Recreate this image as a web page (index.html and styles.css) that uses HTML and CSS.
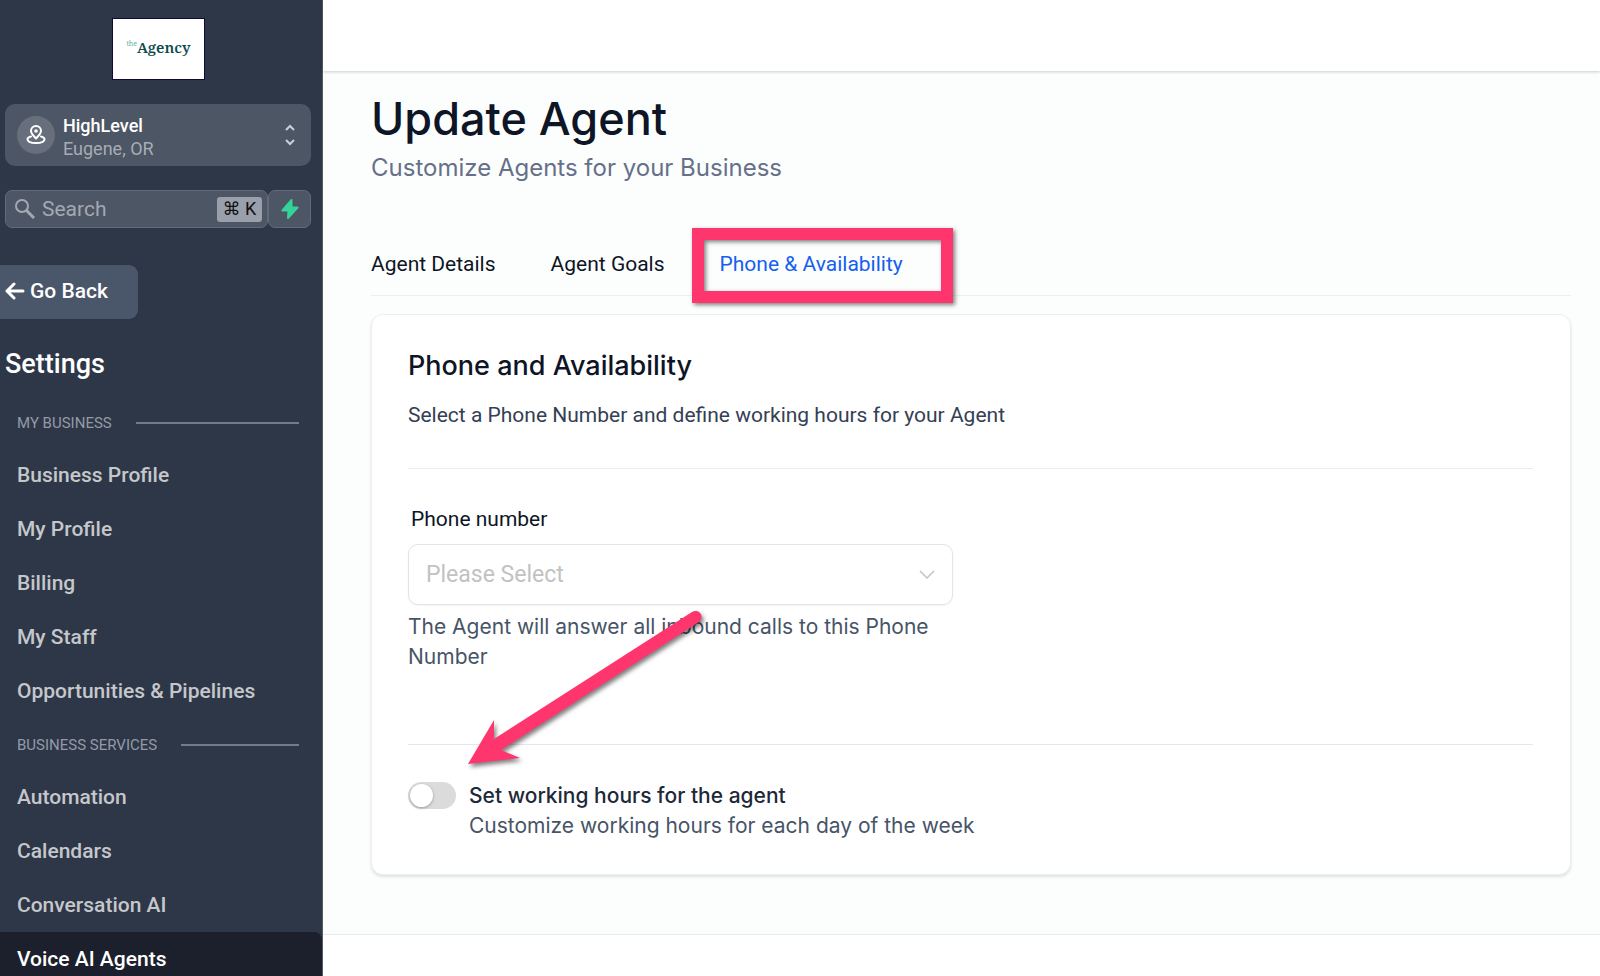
FILE: index.html
```html
<!DOCTYPE html>
<html lang="en">
  <head>
    <meta charset="UTF-8" />
    <meta name="viewport" content="width=device-width, initial-scale=1.0" />
    <title>Update Agent</title>
    <link rel="stylesheet" href="styles.css">
  </head>
  <body>
    <aside class="sidebar">
      <div class="logo"><small>the</small><b>Agency</b></div>

      <button class="account">
        <span class="avatar">
          <svg width="20" height="20" viewBox="0 0 20 20" fill="none" stroke="#fff" stroke-width="2" stroke-linecap="round" stroke-linejoin="round">
            <path d="M10 13.500C7 10.500 5 8.500 5 6a5 5 0 0 1 10 0c0 2.500-2 4.500-5 7.500z" />
            <circle cx="10" cy="6" r="0.800" fill="#fff" />
            <path d="M5 11.500c-2.200.6-3.500 1.500-3.500 2.700C1.500 16.500 5.300 18 10 18s8.500-1.500 8.500-3.800c0-1.200-1.300-2.100-3.500-2.700" />
          </svg>
        </span>
        <span class="account-text">
          <strong>HighLevel</strong>
          <span>Eugene, OR</span>
        </span>
        <svg width="12" height="24" viewBox="0 0 12 24" fill="none" stroke="#cbd0d8" stroke-width="2">
          <path d="M2 7l4-4 4 4M2 17l4 4 4-4" />
        </svg>
      </button>

      <div class="search-row">
        <div class="search">
          <svg width="20" height="20" viewBox="0 0 20 20" fill="none" stroke="#a3a9b3" stroke-width="2">
            <circle cx="7" cy="7" r="6" />
            <path d="M11.500 11.500L19 19" stroke-width="3" />
          </svg>
          <input type="text" placeholder="Search" aria-label="Search" />
          <kbd>⌘ K</kbd>
        </div>
        <button class="bolt" aria-label="Quick actions">
          <svg width="18" height="20" viewBox="0 0 18 20">
            <path d="M10.500 1L1.500 11.500H7.500L7 19l9.500-10.500H10.500z" fill="#34d399" stroke="#34d399" stroke-width="2" stroke-linejoin="round" />
          </svg>
        </button>
      </div>

      <button class="back">
        <svg width="20" height="18" viewBox="0 0 20 18" fill="none" stroke="#fff" stroke-width="3" stroke-linecap="round" stroke-linejoin="round">
          <path d="M18 9H2M9 2L2 9l7 7" />
        </svg>
        Go Back
      </button>

      <h2>Settings</h2>
      <nav>
        <div class="group">MY BUSINESS</div>
        <a href="#">Business Profile</a>
        <a href="#">My Profile</a>
        <a href="#">Billing</a>
        <a href="#">My Staff</a>
        <a href="#">Opportunities &amp; Pipelines</a>
        <div class="group">BUSINESS SERVICES</div>
        <a href="#">Automation</a>
        <a href="#">Calendars</a>
        <a href="#">Conversation AI</a>
        <a href="#" class="active">Voice AI Agents</a>
      </nav>
    </aside>

    <div class="page">
      <header class="topbar"></header>
      <main>
        <h1>Update Agent</h1>
        <p class="subtitle">Customize Agents for your Business</p>

        <div class="tabs">
          <a href="#">Agent Details</a>
          <a href="#">Agent Goals</a>
          <a href="#" class="selected">Phone &amp; Availability</a>
        </div>

        <section class="card">
          <h3>Phone and Availability</h3>
          <p class="intro">Select a Phone Number and define working hours for your Agent</p>

          <div class="field">
            <label for="phone">Phone number</label>
            <div class="select">
              <select id="phone">
                <option>Please Select</option>
              </select>
              <svg width="16" height="10" viewBox="0 0 16 10" fill="none" stroke="#c2c2c2" stroke-width="1.500">
                <path d="M1 1l7 7 7-7" />
              </svg>
            </div>
            <p class="hint">The Agent will answer all inbound calls to this Phone Number</p>
          </div>

          <div class="hours">
            <input type="checkbox" id="hours" />
            <label for="hours">
              <strong>Set working hours for the agent</strong>
              <span>Customize working hours for each day of the week</span>
            </label>
            <svg class="arrow" width="250" height="170" viewBox="0 0 250 170" fill="#ff356e">
              <path d="M8 164L34 120V139L232 12A6 6 0 0 1 239 22L41 150L60 158Z" />
            </svg>
          </div>
        </section>
      </main>
    </div>
  </body>
</html>
```

FILE: styles.css
```css
* {
  box-sizing: border-box;
}
body {
  margin: 0;
  display: flex;
  height: 100vh;
  overflow: hidden;
  font-family: Inter, sans-serif;
  color: #0d1526;
  background-color: #fff;
}
h1,
h2,
h3,
p {
  margin: 0;
  font-weight: 500;
}
a {
  text-decoration: none;
  color: inherit;
}
button,
input,
select {
  font-family: inherit;
}

/* Sidebar */
.sidebar {
  flex: none;
  width: 323px;
  overflow: hidden;
  background-color: #2e3748;
  border-right: 1px solid #545c6b;
  font-family: Roboto, sans-serif;
}
.logo {
  width: 93px;
  height: 62px;
  margin: 18px auto 24px 112px;
  border: 1px solid #0b0b33;
  background-color: #fff;
  color: #0c4a4e;
  display: flex;
  justify-content: center;
  padding-top: 18px;
  font-family: "Noto Serif", "Liberation Serif", serif;
  font-size: 15px;
  line-height: 20px;
}
.logo b {
  font-weight: 600;
}
.logo small {
  font-size: 7px;
  line-height: 14px;
  color: #5bb5a6;
}
.account {
  display: flex;
  align-items: center;
  width: 306px;
  height: 62px;
  margin-left: 5px;
  padding: 0 15px 0 12px;
  border: none;
  border-radius: 10px;
  background-color: #4d5664;
  text-align: left;
}
.avatar {
  display: flex;
  align-items: center;
  justify-content: center;
  width: 38px;
  height: 38px;
  border-radius: 50%;
  background-color: #686f7c;
}
.account-text {
  flex: 1;
  margin-left: 8px;
  padding-top: 4px;
  font-size: 18px;
  line-height: 23px;
  color: #a7acb5;
}
.account-text strong {
  display: block;
  font-weight: 500;
  color: #fff;
}
.search-row {
  display: flex;
  width: 306px;
  height: 38px;
  margin: 24px 0 0 5px;
}
.search {
  flex: 1;
  min-width: 0;
  display: flex;
  align-items: center;
  padding: 0 5px 0 9px;
  border: 1px solid #626a77;
  border-radius: 7px;
  background-color: #4d5664;
}
.search input {
  flex: 1;
  min-width: 0;
  border: none;
  outline: none;
  padding: 0 7px;
  background: none;
  font-size: 21px;
  color: #fff;
}
.search input::placeholder {
  color: #a3a9b3;
}
kbd {
  width: 45px;
  height: 25px;
  border-radius: 3px;
  background-color: #9a9fac;
  color: #111;
  font-family: Roboto, "DejaVu Sans", sans-serif;
  font-size: 18px;
  line-height: 24px;
  text-align: center;
}
.bolt {
  width: 43px;
  padding: 0;
  border: 1px solid #626a77;
  border-radius: 7px;
  background-color: #4d5664;
  display: flex;
  align-items: center;
  justify-content: center;
}
.back {
  display: flex;
  align-items: center;
  gap: 5px;
  width: 138px;
  height: 54px;
  margin-top: 37px;
  padding: 0 0 2px 5px;
  border: none;
  border-radius: 0 9px 9px 0;
  background-color: #4a5669;
  color: #fff;
  font-size: 21px;
  font-weight: 500;
}
.sidebar h2 {
  margin: 27px 0 25px 5px;
  font-size: 27px;
  line-height: 36px;
  color: #fff;
}
.group {
  display: flex;
  align-items: center;
  gap: 24px;
  height: 32px;
  margin: 0 23px 9px 17px;
  font-size: 15px;
  color: #949aa5;
}
a + .group {
  margin-top: 11px;
}
.group::after {
  content: "";
  flex: 1;
  height: 2px;
  background-color: #747a88;
}
nav a {
  display: flex;
  align-items: center;
  height: 54px;
  padding-left: 17px;
  font-size: 21px;
  font-weight: 500;
  color: #c5c7cb;
}
nav a.active {
  border-radius: 0 8px 8px 0;
  background-color: #1b202c;
  color: #fff;
}

/* Main content */
.page {
  flex: 1;
  min-width: 0;
}
.topbar {
  position: relative;
  height: 71px;
  background-color: #fff;
  box-shadow: 0 1px 3px rgba(0, 0, 0, 0.2);
}
main {
  padding: 20px 29px 59px 48px;
  background-color: #fcfefd;
  border-bottom: 1px solid #e8eaeb;
}
h1 {
  font-size: 45px;
  line-height: 56px;
}
.subtitle {
  margin-top: 2px;
  font-size: 24px;
  line-height: 38px;
  font-weight: 400;
  color: #667089;
}
.tabs {
  display: flex;
  gap: 55px;
  height: 65px;
  margin: 44px 0 18px;
  border-bottom: 1px solid #eceeef;
  font-family: Roboto, sans-serif;
  font-size: 21px;
  line-height: 66px;
}
.tabs .selected {
  position: relative;
  color: #155eef;
}
/* highlight frame drawn over the current tab */
.tabs .selected::after {
  content: "";
  position: absolute;
  inset: -3px -50px -8px -28px;
  border: 12px solid #ff356e;
  filter: drop-shadow(2px 2px 2px rgba(0, 0, 0, 0.5));
}
.card {
  padding: 32px 37px 33px 36px;
  border: 1px solid #eceeef;
  border-radius: 12px;
  background-color: #fff;
  box-shadow: 0 2px 3px rgba(16, 24, 40, 0.12);
}
h3 {
  font-size: 27px;
  line-height: 38px;
}
.intro {
  margin-top: 12px;
  padding-bottom: 35px;
  border-bottom: 1px solid #eaecf0;
  font-family: Roboto, sans-serif;
  font-size: 21px;
  line-height: 36px;
  font-weight: 400;
  color: #344054;
}
.field {
  width: 545px;
  padding-top: 34px;
}
.field label {
  display: block;
  margin-left: 3px;
  font-family: Roboto, sans-serif;
  font-size: 21px;
  line-height: 32px;
}
.select {
  position: relative;
  margin-top: 9px;
}
.select svg {
  position: absolute;
  right: 18px;
  top: 26px;
  pointer-events: none;
}
select {
  appearance: none;
  width: 100%;
  height: 61px;
  padding: 0 17px;
  border: 1px solid #e2e4e7;
  border-radius: 10px;
  background-color: #fff;
  box-shadow: 0 1px 2px rgba(16, 24, 40, 0.05);
  font-family: Roboto, sans-serif;
  font-size: 23px;
  color: #c2c2c2;
}
.hint {
  margin-top: 7px;
  font-size: 21px;
  line-height: 30px;
  font-weight: 400;
  color: #475467;
}
.hours {
  position: relative;
  display: flex;
  gap: 13px;
  margin-top: 72px;
  padding-top: 36px;
  border-top: 1px solid #e4e7ec;
}
.hours input {
  appearance: none;
  width: 48px;
  height: 27px;
  margin: 1px 0 0;
  border-radius: 14px;
  background-color: #dbdbdb;
}
.hours input::before {
  content: "";
  display: block;
  width: 23px;
  height: 23px;
  margin: 2px;
  border-radius: 50%;
  background-color: #fff;
  box-shadow: 0 1px 3px rgba(0, 0, 0, 0.3);
}
.hours label {
  font-size: 21px;
  line-height: 30px;
  color: #475467;
}
.hours strong {
  display: block;
  font-weight: 500;
  color: #1d2939;
}
.arrow {
  position: absolute;
  left: 52px;
  bottom: 71px;
  filter: drop-shadow(2px 3px 2px rgba(0, 0, 0, 0.5));
}
```
